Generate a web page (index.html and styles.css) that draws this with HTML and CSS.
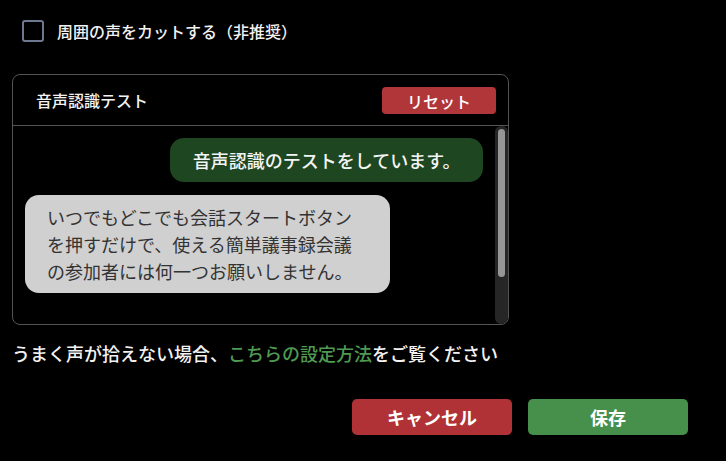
FILE: index.html
```html
<!DOCTYPE html>
<html lang="ja">
<head>
<meta charset="utf-8">
<link rel="stylesheet" href="styles.css">
</head>
<body>
<div class="page">
  <label class="check-row">
    <span class="checkbox"></span>
    <span class="check-label">周囲の声をカットする（非推奨）</span>
  </label>

  <section class="panel">
    <header class="panel-head">
      <span class="panel-title">音声認識テスト</span>
      <button class="btn-reset">リセット</button>
    </header>
    <div class="panel-body">
      <div class="messages">
        <div class="bubble bubble-me">音声認識のテストをしています。</div>
        <div class="bubble bubble-other">いつでもどこでも会話スタートボタンを押すだけで、使える簡単議事録会議の参加者には何一つお願いしません。</div>
      </div>
      <div class="scrollbar"><div class="scroll-thumb"></div></div>
    </div>
  </section>

  <p class="help">うまく声が拾えない場合、<a class="link">こちらの設定方法</a>をご覧ください</p>

  <div class="actions">
    <button class="btn btn-cancel">キャンセル</button>
    <button class="btn btn-save">保存</button>
  </div>
</div>
</body>
</html>
```

FILE: styles.css
```css
html, body {
  margin: 0;
  padding: 0;
  background: #000;
}
body {
  font-family: "Noto Sans CJK JP", "Noto Sans", sans-serif;
  color: #f2f2f2;
  width: 726px;
  height: 461px;
  overflow: hidden;
}
.page {
  padding: 20px 38px 0 12px;
  display: flex;
  flex-direction: column;
}
.check-row {
  display: flex;
  align-items: center;
  gap: 13px;
  margin-left: 10px;
  height: 22px;
}
.checkbox {
  width: 22px;
  height: 22px;
  box-sizing: border-box;
  border: 2px solid #6e7891;
  border-radius: 3px;
  flex: none;
}
.check-label {
  font-size: 16px;
  line-height: 22px;
  font-weight: 500;
}
.panel {
  margin-top: 32px;
  width: 497px;
  box-sizing: border-box;
  border: 1px solid #545454;
  border-radius: 8px;
  overflow: hidden;
}
.panel-head {
  height: 51px;
  box-sizing: border-box;
  border-bottom: 1px solid #545454;
  display: flex;
  align-items: center;
  justify-content: space-between;
  padding: 0 12px 0 23px;
}
.panel-title {
  font-size: 16px;
  font-weight: 500;
}
.btn-reset {
  width: 114px;
  height: 27px;
  border: none;
  border-radius: 4px;
  background: #b1363a;
  color: #fff;
  font-family: inherit;
  font-size: 16px;
  font-weight: 500;
  padding: 0;
  margin-top: 1px;
}
.panel-body {
  height: 198px;
  display: flex;
}
.messages {
  flex: 1;
  overflow: hidden;
  display: flex;
  flex-direction: column;
  gap: 13px;
  padding: 12px 0 0 12px;
}
.scrollbar {
  flex: none;
  width: 13px;
  background: #262626;
  border-radius: 6px;
  padding: 3px;
  box-sizing: border-box;
  display: flex;
  flex-direction: column;
}
.scroll-thumb {
  height: 148px;
  background: #969696;
  border-radius: 4px;
}
.bubble {
  font-size: 18px;
  line-height: 27px;
  border-radius: 14px;
  box-sizing: border-box;
  flex: none;
}
.bubble-me {
  align-self: flex-end;
  margin-right: 12px;
  background: #1e4621;
  color: #f4f4f4;
  padding: 8.5px 22.5px;
  font-weight: 500;
}
.bubble-other {
  align-self: flex-start;
  max-width: 365px;
  background: #d0d0d0;
  color: #333;
  padding: 8.5px 22px;
}
.help {
  margin: 15px 0 0 0;
  font-size: 18px;
  line-height: 27px;
  font-weight: 500;
}
.link {
  color: #4f9a52;
}
.actions {
  margin-top: 32px;
  display: flex;
  justify-content: flex-end;
  gap: 16px;
}
.btn {
  width: 160px;
  height: 36px;
  border: none;
  border-radius: 5px;
  color: #fff;
  font-family: inherit;
  font-size: 18px;
  font-weight: 700;
  padding: 0;
}
.btn-cancel {
  background: #b13236;
}
.btn-save {
  background: #46904b;
}
```
